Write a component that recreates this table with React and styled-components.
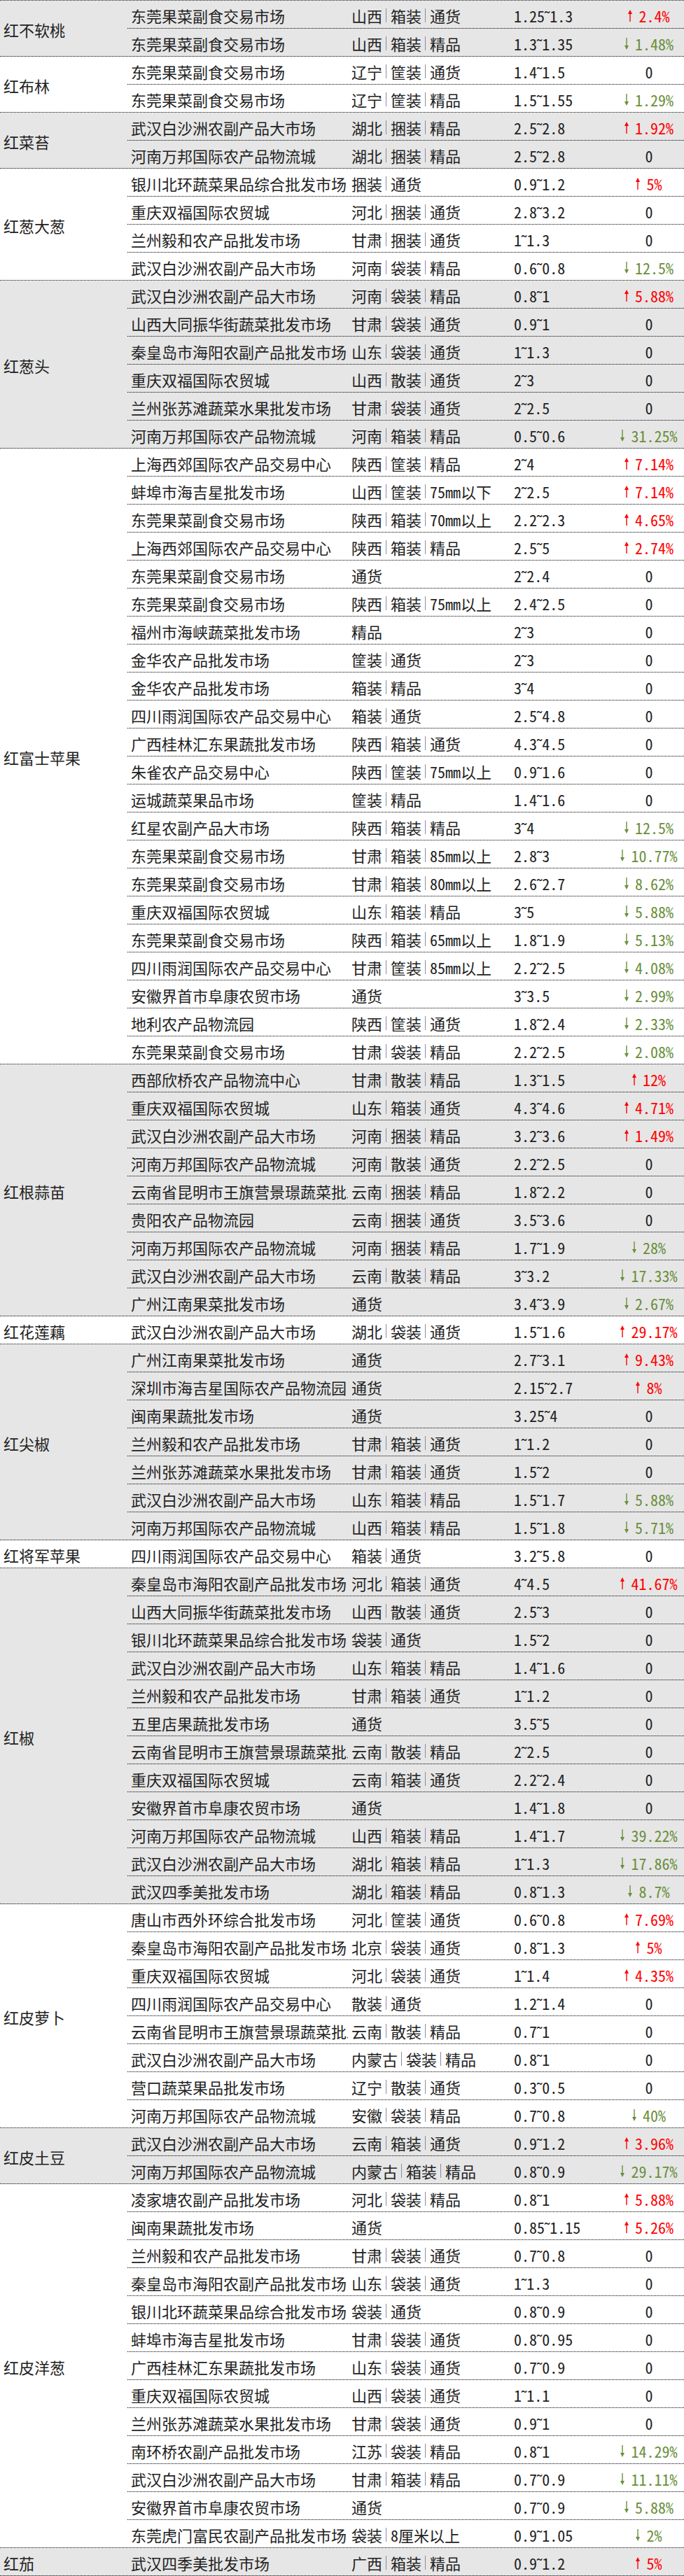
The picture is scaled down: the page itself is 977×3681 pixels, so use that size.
import React from "react";
import styled, { createGlobalStyle } from "styled-components";

const groups = [
  {
    name: "红不软桃",
    rows: [
      ["东莞果菜副食交易市场", "山西|箱装|通货", "1.25~1.3", "+2.4%"],
      ["东莞果菜副食交易市场", "山西|箱装|精品", "1.3~1.35", "-1.48%"],
    ],
  },
  {
    name: "红布林",
    rows: [
      ["东莞果菜副食交易市场", "辽宁|筐装|通货", "1.4~1.5", "0"],
      ["东莞果菜副食交易市场", "辽宁|筐装|精品", "1.5~1.55", "-1.29%"],
    ],
  },
  {
    name: "红菜苔",
    rows: [
      ["武汉白沙洲农副产品大市场", "湖北|捆装|精品", "2.5~2.8", "+1.92%"],
      ["河南万邦国际农产品物流城", "湖北|捆装|精品", "2.5~2.8", "0"],
    ],
  },
  {
    name: "红葱大葱",
    rows: [
      ["银川北环蔬菜果品综合批发市场", "捆装|通货", "0.9~1.2", "+5%"],
      ["重庆双福国际农贸城", "河北|捆装|通货", "2.8~3.2", "0"],
      ["兰州毅和农产品批发市场", "甘肃|捆装|通货", "1~1.3", "0"],
      ["武汉白沙洲农副产品大市场", "河南|袋装|精品", "0.6~0.8", "-12.5%"],
    ],
  },
  {
    name: "红葱头",
    rows: [
      ["武汉白沙洲农副产品大市场", "河南|袋装|精品", "0.8~1", "+5.88%"],
      ["山西大同振华街蔬菜批发市场", "甘肃|袋装|通货", "0.9~1", "0"],
      ["秦皇岛市海阳农副产品批发市场", "山东|袋装|通货", "1~1.3", "0"],
      ["重庆双福国际农贸城", "山西|散装|通货", "2~3", "0"],
      ["兰州张苏滩蔬菜水果批发市场", "甘肃|袋装|通货", "2~2.5", "0"],
      ["河南万邦国际农产品物流城", "河南|箱装|精品", "0.5~0.6", "-31.25%"],
    ],
  },
  {
    name: "红富士苹果",
    rows: [
      ["上海西郊国际农产品交易中心", "陕西|筐装|精品", "2~4", "+7.14%"],
      ["蚌埠市海吉星批发市场", "山西|筐装|75mm以下", "2~2.5", "+7.14%"],
      ["东莞果菜副食交易市场", "陕西|箱装|70mm以上", "2.2~2.3", "+4.65%"],
      ["上海西郊国际农产品交易中心", "陕西|箱装|精品", "2.5~5", "+2.74%"],
      ["东莞果菜副食交易市场", "通货", "2~2.4", "0"],
      ["东莞果菜副食交易市场", "陕西|箱装|75mm以上", "2.4~2.5", "0"],
      ["福州市海峡蔬菜批发市场", "精品", "2~3", "0"],
      ["金华农产品批发市场", "筐装|通货", "2~3", "0"],
      ["金华农产品批发市场", "箱装|精品", "3~4", "0"],
      ["四川雨润国际农产品交易中心", "箱装|通货", "2.5~4.8", "0"],
      ["广西桂林汇东果蔬批发市场", "陕西|箱装|通货", "4.3~4.5", "0"],
      ["朱雀农产品交易中心", "陕西|筐装|75mm以上", "0.9~1.6", "0"],
      ["运城蔬菜果品市场", "筐装|精品", "1.4~1.6", "0"],
      ["红星农副产品大市场", "陕西|箱装|精品", "3~4", "-12.5%"],
      ["东莞果菜副食交易市场", "甘肃|箱装|85mm以上", "2.8~3", "-10.77%"],
      ["东莞果菜副食交易市场", "甘肃|箱装|80mm以上", "2.6~2.7", "-8.62%"],
      ["重庆双福国际农贸城", "山东|箱装|精品", "3~5", "-5.88%"],
      ["东莞果菜副食交易市场", "陕西|箱装|65mm以上", "1.8~1.9", "-5.13%"],
      ["四川雨润国际农产品交易中心", "甘肃|筐装|85mm以上", "2.2~2.5", "-4.08%"],
      ["安徽界首市阜康农贸市场", "通货", "3~3.5", "-2.99%"],
      ["地利农产品物流园", "陕西|筐装|通货", "1.8~2.4", "-2.33%"],
      ["东莞果菜副食交易市场", "甘肃|袋装|精品", "2.2~2.5", "-2.08%"],
    ],
  },
  {
    name: "红根蒜苗",
    rows: [
      ["西部欣桥农产品物流中心", "甘肃|散装|精品", "1.3~1.5", "+12%"],
      ["重庆双福国际农贸城", "山东|箱装|通货", "4.3~4.6", "+4.71%"],
      ["武汉白沙洲农副产品大市场", "河南|捆装|精品", "3.2~3.6", "+1.49%"],
      ["河南万邦国际农产品物流城", "河南|散装|通货", "2.2~2.5", "0"],
      ["云南省昆明市王旗营景璟蔬菜批发市场", "云南|捆装|精品", "1.8~2.2", "0"],
      ["贵阳农产品物流园", "云南|捆装|通货", "3.5~3.6", "0"],
      ["河南万邦国际农产品物流城", "河南|捆装|精品", "1.7~1.9", "-28%"],
      ["武汉白沙洲农副产品大市场", "云南|散装|精品", "3~3.2", "-17.33%"],
      ["广州江南果菜批发市场", "通货", "3.4~3.9", "-2.67%"],
    ],
  },
  {
    name: "红花莲藕",
    rows: [["武汉白沙洲农副产品大市场", "湖北|袋装|通货", "1.5~1.6", "+29.17%"]],
  },
  {
    name: "红尖椒",
    rows: [
      ["广州江南果菜批发市场", "通货", "2.7~3.1", "+9.43%"],
      ["深圳市海吉星国际农产品物流园", "通货", "2.15~2.7", "+8%"],
      ["闽南果蔬批发市场", "通货", "3.25~4", "0"],
      ["兰州毅和农产品批发市场", "甘肃|箱装|通货", "1~1.2", "0"],
      ["兰州张苏滩蔬菜水果批发市场", "甘肃|箱装|通货", "1.5~2", "0"],
      ["武汉白沙洲农副产品大市场", "山东|箱装|精品", "1.5~1.7", "-5.88%"],
      ["河南万邦国际农产品物流城", "山西|箱装|精品", "1.5~1.8", "-5.71%"],
    ],
  },
  {
    name: "红将军苹果",
    rows: [["四川雨润国际农产品交易中心", "箱装|通货", "3.2~5.8", "0"]],
  },
  {
    name: "红椒",
    rows: [
      ["秦皇岛市海阳农副产品批发市场", "河北|箱装|通货", "4~4.5", "+41.67%"],
      ["山西大同振华街蔬菜批发市场", "山西|散装|通货", "2.5~3", "0"],
      ["银川北环蔬菜果品综合批发市场", "袋装|通货", "1.5~2", "0"],
      ["武汉白沙洲农副产品大市场", "山东|箱装|精品", "1.4~1.6", "0"],
      ["兰州毅和农产品批发市场", "甘肃|箱装|通货", "1~1.2", "0"],
      ["五里店果蔬批发市场", "通货", "3.5~5", "0"],
      ["云南省昆明市王旗营景璟蔬菜批发市场", "云南|散装|精品", "2~2.5", "0"],
      ["重庆双福国际农贸城", "云南|箱装|通货", "2.2~2.4", "0"],
      ["安徽界首市阜康农贸市场", "通货", "1.4~1.8", "0"],
      ["河南万邦国际农产品物流城", "山西|箱装|精品", "1.4~1.7", "-39.22%"],
      ["武汉白沙洲农副产品大市场", "湖北|箱装|精品", "1~1.3", "-17.86%"],
      ["武汉四季美批发市场", "湖北|箱装|精品", "0.8~1.3", "-8.7%"],
    ],
  },
  {
    name: "红皮萝卜",
    rows: [
      ["唐山市西外环综合批发市场", "河北|筐装|通货", "0.6~0.8", "+7.69%"],
      ["秦皇岛市海阳农副产品批发市场", "北京|袋装|通货", "0.8~1.3", "+5%"],
      ["重庆双福国际农贸城", "河北|袋装|通货", "1~1.4", "+4.35%"],
      ["四川雨润国际农产品交易中心", "散装|通货", "1.2~1.4", "0"],
      ["云南省昆明市王旗营景璟蔬菜批发市场", "云南|散装|精品", "0.7~1", "0"],
      ["武汉白沙洲农副产品大市场", "内蒙古|袋装|精品", "0.8~1", "0"],
      ["营口蔬菜果品批发市场", "辽宁|散装|通货", "0.3~0.5", "0"],
      ["河南万邦国际农产品物流城", "安徽|袋装|精品", "0.7~0.8", "-40%"],
    ],
  },
  {
    name: "红皮土豆",
    rows: [
      ["武汉白沙洲农副产品大市场", "云南|箱装|通货", "0.9~1.2", "+3.96%"],
      ["河南万邦国际农产品物流城", "内蒙古|箱装|精品", "0.8~0.9", "-29.17%"],
    ],
  },
  {
    name: "红皮洋葱",
    rows: [
      ["凌家塘农副产品批发市场", "河北|袋装|精品", "0.8~1", "+5.88%"],
      ["闽南果蔬批发市场", "通货", "0.85~1.15", "+5.26%"],
      ["兰州毅和农产品批发市场", "甘肃|袋装|通货", "0.7~0.8", "0"],
      ["秦皇岛市海阳农副产品批发市场", "山东|袋装|通货", "1~1.3", "0"],
      ["银川北环蔬菜果品综合批发市场", "袋装|通货", "0.8~0.9", "0"],
      ["蚌埠市海吉星批发市场", "甘肃|袋装|通货", "0.8~0.95", "0"],
      ["广西桂林汇东果蔬批发市场", "山东|袋装|通货", "0.7~0.9", "0"],
      ["重庆双福国际农贸城", "山西|袋装|通货", "1~1.1", "0"],
      ["兰州张苏滩蔬菜水果批发市场", "甘肃|袋装|通货", "0.9~1", "0"],
      ["南环桥农副产品批发市场", "江苏|袋装|精品", "0.8~1", "-14.29%"],
      ["武汉白沙洲农副产品大市场", "甘肃|箱装|精品", "0.7~0.9", "-11.11%"],
      ["安徽界首市阜康农贸市场", "通货", "0.7~0.9", "-5.88%"],
      ["东莞虎门富民农副产品批发市场", "袋装|8厘米以上", "0.9~1.05", "-2%"],
    ],
  },
  {
    name: "红茄",
    rows: [["武汉四季美批发市场", "广西|箱装|精品", "0.9~1.2", "+5%"]],
  },
];

const GlobalStyle = createGlobalStyle`
  html, body {
    margin: 0;
    padding: 0;
    background: #fff;
  }
  body {
    font-family: "Noto Sans CJK SC", sans-serif;
    font-size: 22px;
    color: #222;
    font-feature-settings: "hwid" 1;
  }
`;

const Table = styled.div`
  width: 977px;
  border-top: 1px dotted #000;
`;

const Group = styled.section`
  display: flex;
  background: ${(p) => (p.$shaded ? "#e6e6e6" : "#fff")};
  border-bottom: 1px dotted #000;
`;

const Category = styled.div`
  flex: none;
  width: 182px;
  display: flex;
  align-items: center;
  padding: 3px 0 0 5px;
  box-sizing: border-box;
  white-space: nowrap;
`;

const Rows = styled.div`
  flex: 1;
  min-width: 0;
`;

const Row = styled.div`
  display: flex;
  align-items: center;
  height: 36px;
  padding-top: 3px;
  & + & {
    border-top: 1px dotted #000;
  }
`;

const Market = styled.div`
  flex: none;
  width: 315px;
  padding-left: 5px;
  box-sizing: border-box;
  white-space: nowrap;
  overflow: hidden;
`;

const Spec = styled.div`
  flex: none;
  width: 232px;
  padding-left: 5px;
  box-sizing: border-box;
  display: flex;
  align-items: center;
  white-space: nowrap;
`;

const SpecPart = styled.span`
  line-height: 20px;
  & + & {
    border-left: 1px solid #8c8ca0;
    margin-left: 5px;
    padding-left: 6px;
  }
`;

const Price = styled.div`
  flex: none;
  width: 148px;
  padding-left: 5px;
  box-sizing: border-box;
  white-space: nowrap;
`;

const Change = styled.div`
  flex: 1;
  display: flex;
  align-items: center;
  justify-content: center;
  white-space: nowrap;
  color: ${(p) =>
    p.$dir === "up" ? "#ff0000" : p.$dir === "down" ? "#6a8f3c" : "inherit"};
`;

const ArrowIcon = styled.svg`
  flex: none;
  margin-right: 9px;
`;

const Arrow = ({ up }) => (
  <ArrowIcon width="6" height="17" viewBox="0 0 6 17">
    {up ? (
      <>
        <polygon points="0,6 3,0 6,6" fill="currentColor" />
        <line x1="3" y1="4" x2="3" y2="17" stroke="currentColor" strokeWidth="1.4" />
      </>
    ) : (
      <>
        <polygon points="0,11 3,17 6,11" fill="currentColor" />
        <line x1="3" y1="0" x2="3" y2="13" stroke="currentColor" strokeWidth="1.4" />
      </>
    )}
  </ArrowIcon>
);

const ChangeCell = ({ value }) => {
  const dir = value.startsWith("+") ? "up" : value.startsWith("-") ? "down" : "flat";
  const text = dir === "flat" ? value : value.slice(1);
  return (
    <Change $dir={dir}>
      {dir !== "flat" && <Arrow up={dir === "up"} />}
      {text}
    </Change>
  );
};

const App = () => (
  <>
    <GlobalStyle />
    <Table>
      {groups.map((group, i) => (
        <Group key={group.name} $shaded={i % 2 === 0}>
          <Category>{group.name}</Category>
          <Rows>
            {group.rows.map(([market, spec, price, change], j) => (
              <Row key={j}>
                <Market>{market}</Market>
                <Spec>
                  {spec.split("|").map((part) => (
                    <SpecPart key={part}>{part}</SpecPart>
                  ))}
                </Spec>
                <Price>{price.replace("~", "˜")}</Price>
                <ChangeCell value={change} />
              </Row>
            ))}
          </Rows>
        </Group>
      ))}
    </Table>
  </>
);

export default App;
